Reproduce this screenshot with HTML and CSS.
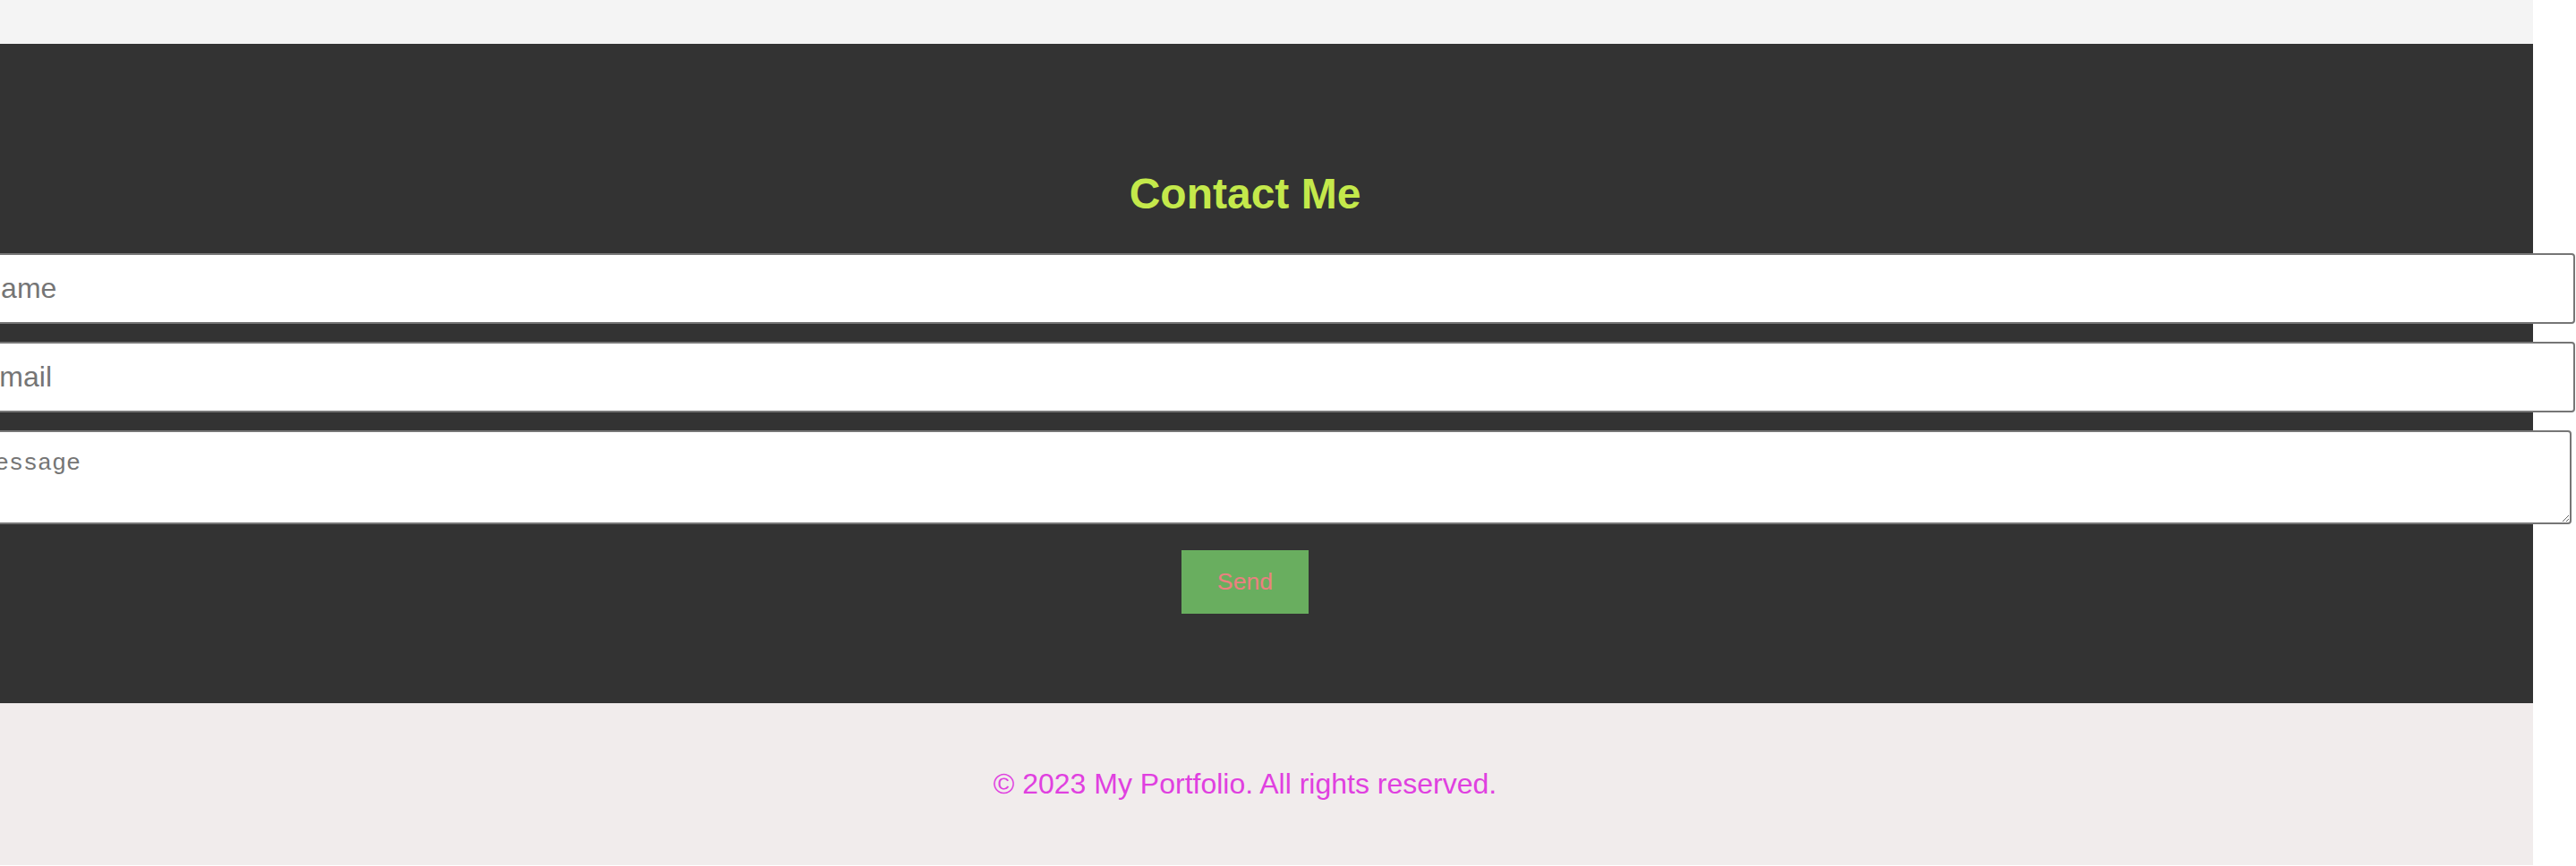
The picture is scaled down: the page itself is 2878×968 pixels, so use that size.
FILE: index.html
```html
<!DOCTYPE html>
<html lang="en">
<head>
<meta charset="utf-8">
<title>My Portfolio</title>
<link rel="stylesheet" href="styles.css">
</head>
<body>
<div class="page">
  <div class="prev-section"></div>
  <section class="contact">
    <h2 class="contact-title">Contact Me</h2>
    <form class="contact-form">
      <input class="field" type="text" placeholder="Name">
      <input class="field field-email" type="email" placeholder="Email">
      <textarea class="field-message" rows="2" placeholder="Message"></textarea>
      <button class="send-btn" type="button">Send</button>
    </form>
  </section>
  <footer class="site-footer">
    <p class="footer-text">© 2023 My Portfolio. All rights reserved.</p>
  </footer>
</div>
</body>
</html>
```

FILE: styles.css
```css
html {
  overflow: hidden;
  background: #ffffff;
}

body {
  margin: 0;
  background: #ffffff;
  font-family: "Liberation Sans", Arial, sans-serif;
}

.page {
  width: 2878px;
  margin-left: -48px;
}

.prev-section {
  height: 49px;
  background: #f4f4f4;
}

.contact {
  background: #333333;
  padding: 100px 0 100px;
}

.contact-title {
  margin: 40px 0 39px;
  text-align: center;
  color: #c4e94b;
  font-size: 48px;
  font-weight: bold;
  line-height: normal;
}

.contact-form {
  display: flex;
  flex-direction: column;
  align-items: flex-start;
}

.field {
  box-sizing: border-box;
  display: block;
  width: calc(100% + 43px);
  height: 79px;
  margin: 0 0 20px 4px;
  padding: 0 20px;
  border: 2px solid #767676;
  border-radius: 4px;
  background: #ffffff;
  font-family: "Liberation Sans", Arial, sans-serif;
  font-size: 32px;
  color: #222222;
}

.field::placeholder,
.field-message::placeholder {
  color: #757575;
}

.field-message {
  box-sizing: border-box;
  display: block;
  width: calc(100% + 39px);
  height: 105px;
  margin: 0 0 29px 4px;
  padding: 20px;
  border: 2px solid #767676;
  border-radius: 4px;
  background: #ffffff;
  font-family: "Liberation Mono", "Courier New", monospace;
  font-size: 26.67px;
  line-height: normal;
  color: #222222;
}

.send-btn {
  align-self: center;
  box-sizing: border-box;
  height: 71px;
  padding: 0 40px;
  border: none;
  background: #69ae5f;
  color: #ec8080;
  font-family: "Liberation Sans", Arial, sans-serif;
  font-size: 26.67px;
  cursor: pointer;
}

.site-footer {
  background: #f1ecec;
  padding: 40px 0;
  text-align: center;
}

.footer-text {
  margin: 32px 0;
  color: #e040e0;
  font-size: 32px;
  line-height: normal;
}
```
